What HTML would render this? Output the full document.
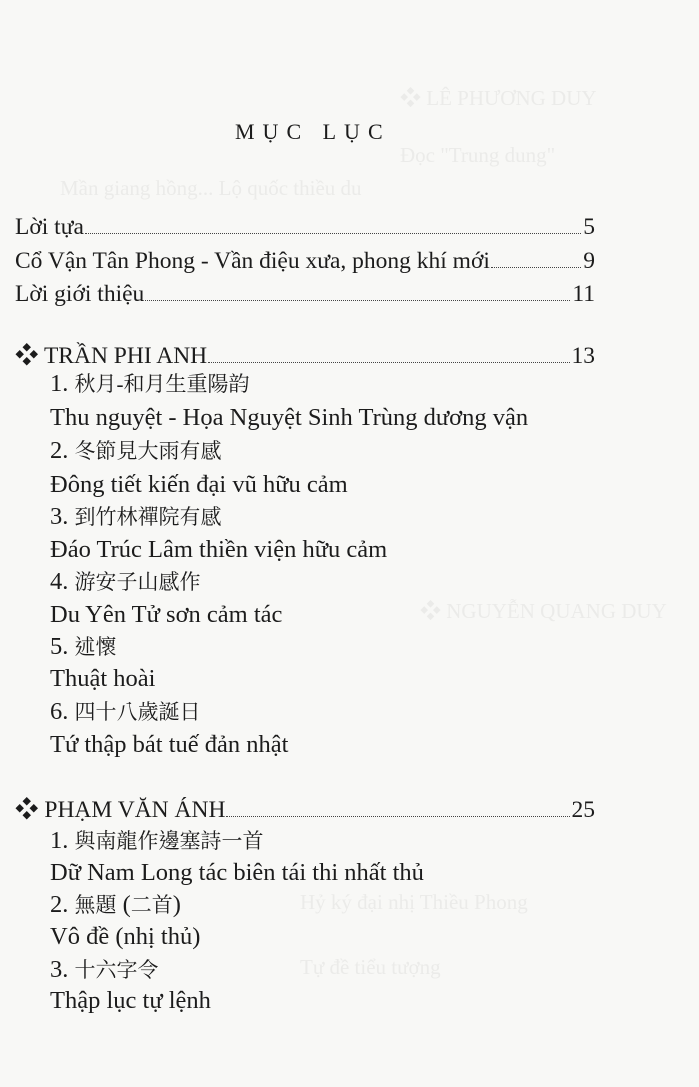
<!DOCTYPE html>
<html><head><meta charset="utf-8"><style>
body{margin:0;background:#f8f8f6;}
.p{position:relative;width:699px;height:1087px;overflow:hidden;background:#f8f8f6;font-family:"Liberation Serif","Noto Serif CJK SC",serif;color:#1c1c1c;}
.l{position:absolute;height:30px;line-height:30px;font-size:24.5px;white-space:nowrap;}
.row{position:absolute;left:15px;width:580px;height:30px;line-height:30px;font-size:23.5px;display:flex;align-items:flex-end;}
.row .t{white-space:nowrap;}
.row .d{flex:1;border-bottom:1px dotted #444;margin:0 2px 8px 1px;}
.row .n{white-space:nowrap;}
.cj{font-family:"Liberation Serif","Noto Serif CJK TC",serif;font-size:21px;}
.g{position:absolute;color:#ebebe9;font-size:21px;white-space:nowrap;}
</style></head><body><div class="p">
<div class="g" style="left:400px;top:82px">❖ LÊ PHƯƠNG DUY</div>
<div class="g" style="left:60px;top:176px">Mần giang hồng... Lộ quốc thiều du</div>
<div class="g" style="left:400px;top:143px">Đọc "Trung dung"</div>
<div class="g" style="left:420px;top:595px">❖ NGUYỄN QUANG DUY</div>
<div class="g" style="left:300px;top:890px">Hỷ ký đại nhị Thiều Phong</div>
<div class="g" style="left:300px;top:955px">Tự đề tiểu tượng</div>

<div class="l" style="left:235px;top:117px;font-size:22px;letter-spacing:8px">MỤC LỤC</div>

<div class="row" style="top:212px"><span class="t">Lời tựa</span><span class="d"></span><span class="n">5</span></div>
<div class="row" style="top:246px"><span class="t">Cổ Vận Tân Phong - Vần điệu xưa, phong khí mới</span><span class="d"></span><span class="n">9</span></div>
<div class="row" style="top:279px"><span class="t">Lời giới thiệu</span><span class="d"></span><span class="n">11</span></div>
<div class="row" style="top:341px"><span class="t">❖ TRẦN PHI ANH</span><span class="d"></span><span class="n">13</span></div>

<div class="l" style="left:50px;top:369px">1. <span class="cj">秋月-和月生重陽韵</span></div>
<div class="l" style="left:50px;top:403px">Thu nguyệt - Họa Nguyệt Sinh Trùng dương vận</div>
<div class="l" style="left:50px;top:436px">2. <span class="cj">冬節見大雨有感</span></div>
<div class="l" style="left:50px;top:470px">Đông tiết kiến đại vũ hữu cảm</div>
<div class="l" style="left:50px;top:502px">3. <span class="cj">到竹林禪院有感</span></div>
<div class="l" style="left:50px;top:535px">Đáo Trúc Lâm thiền viện hữu cảm</div>
<div class="l" style="left:50px;top:567px">4. <span class="cj">游安子山感作</span></div>
<div class="l" style="left:50px;top:600px">Du Yên Tử sơn cảm tác</div>
<div class="l" style="left:50px;top:632px">5. <span class="cj">述懷</span></div>
<div class="l" style="left:50px;top:664px">Thuật hoài</div>
<div class="l" style="left:50px;top:697px">6. <span class="cj">四十八歲誕日</span></div>
<div class="l" style="left:50px;top:730px">Tứ thập bát tuế đản nhật</div>

<div class="row" style="top:795px"><span class="t">❖ PHẠM VĂN ÁNH</span><span class="d"></span><span class="n">25</span></div>
<div class="l" style="left:50px;top:826px">1. <span class="cj">與南龍作邊塞詩一首</span></div>
<div class="l" style="left:50px;top:858px">Dữ Nam Long tác biên tái thi nhất thủ</div>
<div class="l" style="left:50px;top:890px">2. <span class="cj">無題</span> (<span class="cj">二首</span>)</div>
<div class="l" style="left:50px;top:922px">Vô đề (nhị thủ)</div>
<div class="l" style="left:50px;top:955px">3. <span class="cj">十六字令</span></div>
<div class="l" style="left:50px;top:986px">Thập lục tự lệnh</div>
</div></body></html>
